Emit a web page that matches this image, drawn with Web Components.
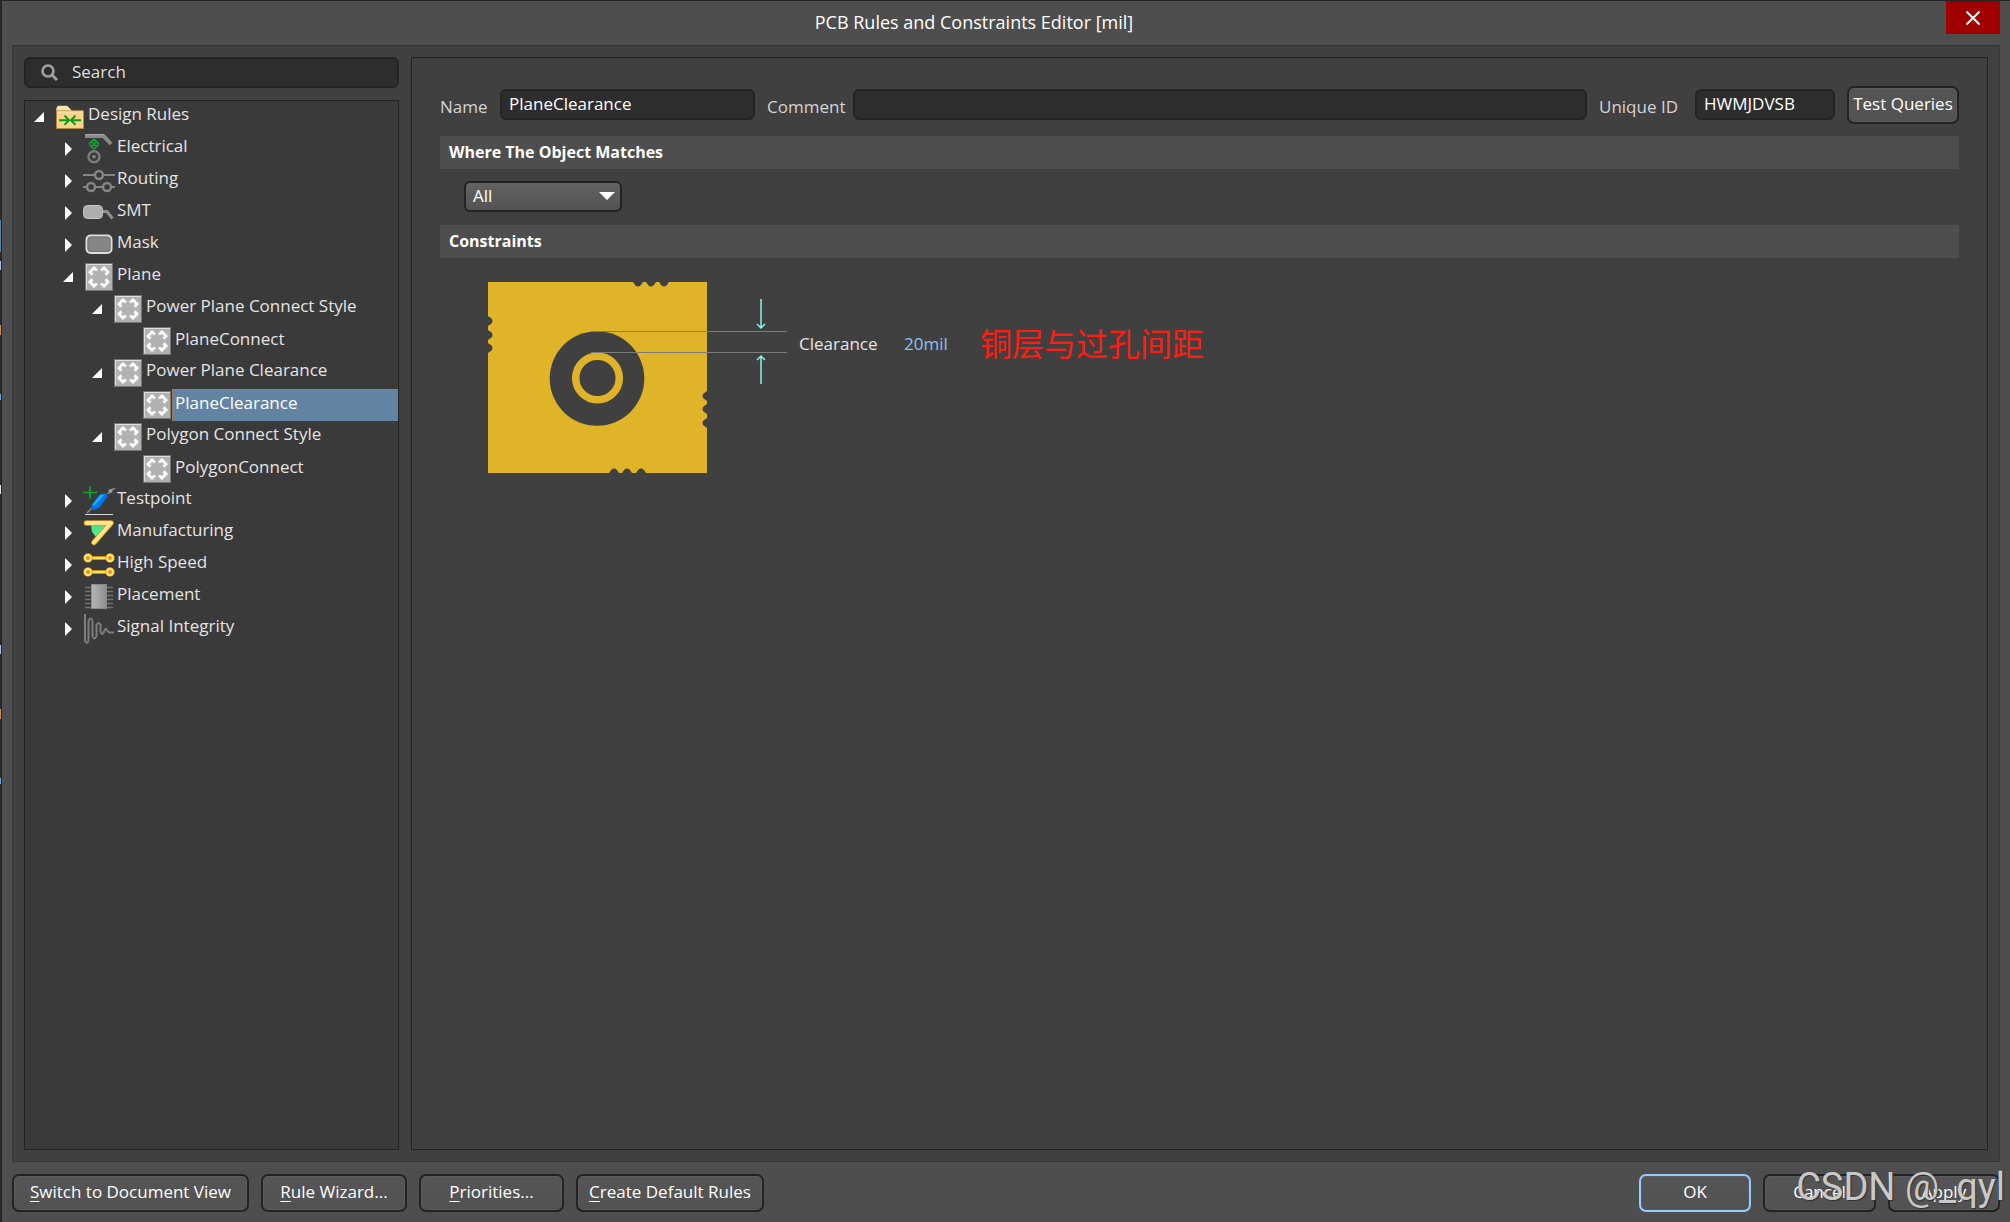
<!DOCTYPE html>
<html lang="en">
<head>
<meta charset="utf-8">
<title>PCB Rules and Constraints Editor [mil]</title>
<style>
  body {
    margin: 0; background: #4e4e4e; color: #e4e4e4;
    font: 17px/24px "Open Sans", "Noto Sans", "Noto Sans CJK SC", sans-serif;
  }
</style>
</head>
<body>
<rules-dialog heading="PCB Rules and Constraints Editor [mil]">
  <rule-tree slot="side"></rule-tree>
  <rule-editor slot="main"></rule-editor>
  <ui-button slot="left" style="--w:237px"><u>S</u>witch to Document View</ui-button>
  <ui-button slot="left" style="--w:146px"><u>R</u>ule Wizard...</ui-button>
  <ui-button slot="left" style="--w:145px"><u>P</u>riorities...</ui-button>
  <ui-button slot="left" style="--w:188px"><u>C</u>reate Default Rules</ui-button>
  <ui-button slot="right" style="--w:112px;--edge:#99cbff">OK</ui-button>
  <ui-button slot="right" style="--w:113px">Cancel</ui-button>
  <ui-button slot="right" style="--w:112px">Apply</ui-button>
  <span slot="mark">CSDN @_qyl</span>
</rules-dialog>

<script>
class Base extends HTMLElement {
  constructor() {
    super();
    this.attachShadow({ mode: "open" });
  }
  connectedCallback() {
    this.shadowRoot.innerHTML = "<style>*{box-sizing:border-box}" + this.css() + "</style>" + this.html();
  }
}

customElements.define("ui-button", class extends Base {
  css() {
    return `:host{display:block;flex:none;width:var(--w,auto)}
      button{display:block;width:100%;height:38px;padding:0 0 2px;border:2px solid var(--edge,#232323);border-radius:7px;
        background:linear-gradient(#555,#525252);box-shadow:inset 0 0 0 1px #5c5c5c;
        font:inherit;color:#fff;text-align:center;white-space:nowrap}
      ::slotted(u){text-underline-offset:3px}`;
  }
  html() { return `<button type="button"><slot></slot></button>`; }
});

customElements.define("rules-dialog", class extends Base {
  css() {
    return `:host{display:flex;min-height:100vh}
      .edge{flex:none;width:1px;background:linear-gradient(#2b2b2b 220px,#5b7fa6 220px 252px,#2b2b2b 252px 261px,#9fc3e6 261px 270px,
        #2b2b2b 270px 325px,#c8935a 325px 335px,#2b2b2b 335px 394px,#6aa5df 394px 400px,#2b2b2b 400px 485px,#e0e0e8 485px 494px,
        #2b2b2b 494px 645px,#9fc3e6 645px 654px,#2b2b2b 654px 709px,#c8935a 709px 719px,#2b2b2b 719px 778px,#6aa5df 778px 784px,#2b2b2b 784px)}
      .win{flex:1;min-width:0;display:flex;flex-direction:column;border:solid #232323;border-width:1px 0 0 1px;background:#4e4e4e}
      header{display:flex;align-items:flex-start;height:44px;padding-right:10px}
      h1{flex:1;margin:0;font:inherit;font-size:18px;line-height:42px;text-align:center;color:#fff}
      .close{width:54px;height:33px;border:0;padding:0;background:#a00000;display:grid;place-items:center}
      main{flex:1;display:flex;gap:12px;margin:0 10px;padding:11px;border:1px solid #363636;background:#404040}
      footer{position:relative;display:flex;gap:12px;padding:12px 10px 10px}
      .gap{flex:1}
      .mark{position:absolute;right:5px;top:3px;font:400 38px/44px Roboto,sans-serif;color:#c9c9c9;text-shadow:1px 1px 1px #333;pointer-events:none}`;
  }
  html() {
    return `<div class="edge"></div><div class="win">
      <header><h1>${this.getAttribute("heading")}</h1>
        <button class="close" aria-label="Close"><svg width="14" height="14" stroke="#fff" stroke-width="2"><path d="M.5 .5 13.500 13.500M13.500 .5 .5 13.500"/></svg></button></header>
      <main><slot name="side"></slot><slot name="main"></slot></main>
      <footer><slot name="left"></slot><div class="gap"></div><slot name="right"></slot><div class="mark"><slot name="mark"></slot></div></footer>
    </div>`;
  }
});

const ICONS = {
  folder: `<g transform="translate(0 4)"><path d="M2.500 24V3.500L4 .8H13L18 5.500H29V24Z" fill="#e9c77c"/><path d="M2.500 5.500V3L4 1H13L17.500 5.500Z" fill="#fbe3ad"/><rect x="2.500" y="6" width="27" height="17.500" fill="#fbd585" stroke="#b08a45"/><path d="M3.500 7h25" stroke="#fff0c8"/><path d="M5 15.200h9M10.500 10.500l4.500 4.700-4.500 4.700M27 15.200h-9M21.500 10.500 17 15.200l4.500 4.700" stroke="#0a9b25" stroke-width="2" fill="none"/></g>`,
  electrical: `<path d="M2 3H20.500L28 11" stroke="#8b8b8b" stroke-width="4" fill="none"/><path d="M2 1.500H21" stroke="#aaa"/><path d="M11 6l5 5M8.500 8.500l5 5M6 11l5 5M11 6l-5 5M13.500 8.500l-5 5M16 11l-5 5" stroke="#10a832" stroke-width="1.500"/><circle cx="11" cy="23.700" r="5.500" fill="none" stroke="#7c7c7c" stroke-width="2.500"/><circle cx="11" cy="23.700" r="1.800" fill="#888"/>`,
  routing: `<g fill="none" stroke="#858585" stroke-width="2"><path d="M0 10H11.500M20.500 10H32M0 22H3.500M12.500 22H19.500M28.500 22H32"/><circle cx="16" cy="10" r="4" stroke-width="2.500"/><circle cx="8" cy="22" r="4" stroke-width="2.500"/><circle cx="24" cy="22" r="4" stroke-width="2.500"/></g>`,
  smt: `<path d="M18 14.500h6l5.500 7" fill="none" stroke="#909090" stroke-width="3"/><rect x=".5" y="8.500" width="19" height="13" rx="4" fill="#aeaeae" stroke="#c6c6c6"/>`,
  mask: `<rect x="3.500" y="6.500" width="25" height="17.500" rx="4" fill="#858585" stroke="#dedede" stroke-width="2"/><rect x="5" y="8" width="22" height="14.500" rx="3" fill="none" stroke="#747474"/>`,
  plane: `<rect x="2.500" y="2.500" width="27" height="27" fill="#b1b1b1" stroke="#757575"/><path d="M3.500 28V3.500H29" fill="none" stroke="#dedede"/><path d="M9.500 13.700 7 11 11 7 14 9.500M22.500 13.700 25 11 21 7 18 9.500M9.500 18.300 7 21 11 25 14 22.500M22.500 18.300 25 21 21 25 18 22.500" fill="none" stroke="#fff" stroke-width="2.800"/>`,
  testpoint: `<path d="M0 7.500H14M7 1V14" stroke="#11a832" stroke-width="1.600"/><path d="M2 29.500H30" stroke="#d8d8d8"/><path d="M4 28l5-5" stroke="#888" stroke-width="1.500"/><path d="M9 24.500 8.500 20 16.500 9.500 23.500 8 24.500 11.500 17 22 13 24.500Z" fill="#0872e8"/><path d="M10 19 17.500 10l4-.5L11 21Z" fill="#16b4ff"/><path d="M25 9 29 4.500 32 3.500" stroke="#8c8c8c" stroke-width="1.500" fill="none"/><circle cx="27.500" cy="6" r="2" fill="#999"/>`,
  manufacturing: `<g transform="translate(0 2)"><path d="M8 6H23L13 18 9 13Z" fill="#4fe58a"/><path d="M3.500 4H28L11 23.500" fill="none" stroke="#d99420" stroke-width="5.600" stroke-linejoin="round" stroke-linecap="round"/><path d="M3.500 4H28L11 23.500" fill="none" stroke="#fbe48a" stroke-width="4" stroke-linejoin="round" stroke-linecap="round"/></g>`,
  highspeed: `<path d="M6 9H26M6 23H26" stroke="#d98a10" stroke-width="4"/><path d="M6 9H26M6 23H26" stroke="#ffe860" stroke-width="2"/><g fill="#c58c14" stroke="#e58f12" stroke-width="4.500"><circle cx="5" cy="9" r="2.500"/><circle cx="27" cy="9" r="2.500"/><circle cx="5" cy="23" r="2.500"/><circle cx="27" cy="23" r="2.500"/></g><g fill="none" stroke="#ffe97a" stroke-width="2"><circle cx="5" cy="9" r="2.900"/><circle cx="27" cy="9" r="2.900"/><circle cx="5" cy="23" r="2.900"/><circle cx="27" cy="23" r="2.900"/></g>`,
  placement: `<path d="M2 6.500H30M2 10.500H30M2 14.500H30M2 18.500H30M2 22.500H30M2 26.500H30" stroke="#727272" stroke-width="1.500"/><rect x="8.500" y="3.500" width="15" height="24" fill="url(#pg)" stroke="#8a8a8a"/><defs><linearGradient id="pg"><stop stop-color="#b5b5b5"/><stop offset="1" stop-color="#8e8e8e"/></linearGradient></defs>`,
  signal: `<path d="M2 1V27.500Q4 32 5.500 27.500V8Q7.500 3 9.500 8V23Q11.500 28 13.500 23V12Q15.500 8 17.500 12V19Q19 23 21 19Q22.500 13 24.500 18L26.500 19.500H31" fill="none" stroke="#7d7d7d" stroke-width="2"/>`
};

customElements.define("rule-node", class extends Base {
  css() {
    const level = this.getAttribute("level");
    return `:host{display:block}
      .row{display:flex;align-items:flex-start;width:100%;height:32px;padding:0 0 0 ${9 + 29 * level}px;border:0;background:none;
        font:inherit;color:inherit;text-align:left;white-space:nowrap}
      .arrow{flex:none;width:10px;height:32px}
      .icon{flex:none;width:32px;height:32px;margin-left:10px;margin-right:-2px;overflow:visible}
      .label{flex:1;height:32px;margin-left:1px;padding-left:3px;line-height:26px}
      .leaf .label{line-height:28px}
      .sel .label{background:#6383a3;color:#fff;outline:1px dotted #a57a55;outline-offset:-1px}`;
  }
  html() {
    const state = this.getAttribute("state");
    const arrow = state === "open" ? `<path d="M10 11V21H0Z"/>` : state === "closed" ? `<path d="M2 9 9 16 2 23Z"/>` : "";
    const cls = ["row", state ? "" : "leaf", this.hasAttribute("selected") ? "sel" : ""].join(" ");
    return `<button type="button" class="${cls}"><svg class="arrow" viewBox="0 0 10 32" fill="#fff">${arrow}</svg>
      <svg class="icon" width="32" height="32">${ICONS[this.getAttribute("icon")]}</svg><span class="label"><slot></slot></span></button>`;
  }
});

customElements.define("rule-tree", class extends Base {
  css() {
    return `:host{flex:none;width:375px;display:flex;flex-direction:column;gap:12px}
      .search{display:flex;align-items:center;height:31px;padding-left:15px;border:2px solid #242424;border-radius:6px;background:#2d2d2d}
      .search input{flex:1;min-width:0;margin-left:14px;padding:0 0 2px;border:0;outline:0;background:none;font:inherit;color:#ddd}
      input::placeholder{color:#dedede;opacity:1}
      nav{flex:1;border:1px solid #232323;background:#3a3a3a}`;
  }
  html() {
    const rows = [
      [0, "folder", "open", "Design Rules"], [1, "electrical", "closed", "Electrical"], [1, "routing", "closed", "Routing"],
      [1, "smt", "closed", "SMT"], [1, "mask", "closed", "Mask"], [1, "plane", "open", "Plane"],
      [2, "plane", "open", "Power Plane Connect Style"], [3, "plane", "", "PlaneConnect"],
      [2, "plane", "open", "Power Plane Clearance"], [3, "plane", "", "PlaneClearance", "selected"],
      [2, "plane", "open", "Polygon Connect Style"], [3, "plane", "", "PolygonConnect"],
      [1, "testpoint", "closed", "Testpoint"], [1, "manufacturing", "closed", "Manufacturing"],
      [1, "highspeed", "closed", "High Speed"], [1, "placement", "closed", "Placement"], [1, "signal", "closed", "Signal Integrity"]
    ];
    return `<label class="search"><svg width="17" height="17" fill="none" stroke="#a0a0a0"><circle cx="7" cy="7" r="5.500" stroke-width="2.600"/><path d="M11 11l5 5" stroke-width="3"/></svg>
      <input type="text" placeholder="Search" aria-label="Search"></label>
      <nav>${rows.map(r => `<rule-node level="${r[0]}" icon="${r[1]}" state="${r[2]}" ${r[4] || ""}>${r[3]}</rule-node>`).join("")}</nav>`;
  }
});

customElements.define("section-bar", class extends Base {
  css() { return `:host{display:block}h2{margin:0;padding:0 9px;height:33px;background:#4e4e4e;color:#fff;font-size:16px;font-weight:700;line-height:33px}`; }
  html() { return `<h2><slot></slot></h2>`; }
});

customElements.define("clearance-diagram", class extends Base {
  css() { return `:host{display:block;flex:none}svg{display:block}`; }
  html() {
    const bite = `M-6.500-1 -5 0 -2.500 3.500Q0 5.500 2.500 3.500L5 0 6.500-1Z`;
    const bites = [[150, 0, 0], [163, 0, 0], [176, 0, 0], [126, 191, 180], [139, 191, 180], [153, 191, 180],
      [0, 39, -90], [0, 53, -90], [0, 66, -90], [219, 114, 90], [219, 127, 90], [219, 141, 90]]
      .map(b => `<path d="${bite}" transform="translate(${b[0]} ${b[1]}) rotate(${b[2]})"/>`).join("");
    return `<svg width="300" height="192" role="img" aria-label="Plane clearance">
      <rect width="219" height="191" fill="#dfb429"/><g fill="#404040">${bites}<circle cx="109" cy="96.500" r="47.300"/></g>
      <circle cx="109.500" cy="96" r="21.800" fill="none" stroke="#dfb429" stroke-width="7.500"/>
      <path d="M103 49.500H299M103 70.500H299" stroke="#7b7b7b"/>
      <path d="M273 17V46M269 42l4 4 4-4M273 102V74M269 78l4-4 4 4" fill="none" stroke="#8ff0e4" stroke-width="1.500"/></svg>`;
  }
});

customElements.define("rule-editor", class extends Base {
  css() {
    return `:host{flex:1;min-width:0;display:flex;flex-direction:column;border:1px solid #232323;padding:28px}
      .fields{display:flex;align-items:flex-start;height:38px;margin-bottom:12px}
      .fields label{flex:none;padding:9px 0 0 12px;color:#d4d4d4;white-space:nowrap}
      .fields label:first-child{padding-left:0}
      input{min-width:0;height:31px;margin:3px 0 0;padding:0 7px 2px;border:2px solid #242424;border-radius:6px;background:#2d2d2d;font:inherit;color:#fff}
      .fields ui-button{margin-left:12px}
      select{appearance:none;display:block;width:158px;height:31px;margin:12px 0 13px 24px;padding:0 7px 2px;border:2px solid #232323;border-radius:6px;
        background:#5a5a5a linear-gradient(#636363,#525252);font:inherit;line-height:24px;color:#fff}
      .pick{position:relative}
      .pick svg{position:absolute;left:159px;top:23px;pointer-events:none}
      .constraint{display:flex;align-items:flex-start;padding:24px 0 0 48px}
      .constraint>a,.constraint>p{margin:46px 0 0;line-height:32px;white-space:nowrap}
      .constraint a{color:#8fc1f5;text-decoration:none}
      .constraint>.name{width:105px;margin-left:11px}
      .constraint>a{width:76px}
      .constraint>.note{font-size:32px;color:#ff1c12}`;
  }
  html() {
    return `<div class="fields">
        <label for="name" style="width:60px">Name</label><input id="name" style="width:255px" value="PlaneClearance">
        <label for="comment" style="width:98px">Comment</label><input id="comment" style="flex:1">
        <label for="uid" style="width:108px">Unique ID</label><input id="uid" style="width:140px" value="HWMJDVSB">
        <ui-button style="--w:112px">Test Queries</ui-button></div>
      <section-bar>Where The Object Matches</section-bar>
      <div class="pick"><select aria-label="Scope"><option>All</option></select><svg width="16" height="8" fill="#fff"><path d="M0 0H16L8 8Z"/></svg></div>
      <section-bar>Constraints</section-bar>
      <div class="constraint"><clearance-diagram></clearance-diagram>
        <p class="name">Clearance</p><a href="#">20mil</a><p class="note">铜层与过孔间距</p></div>`;
  }
});
</script>
</body>
</html>
